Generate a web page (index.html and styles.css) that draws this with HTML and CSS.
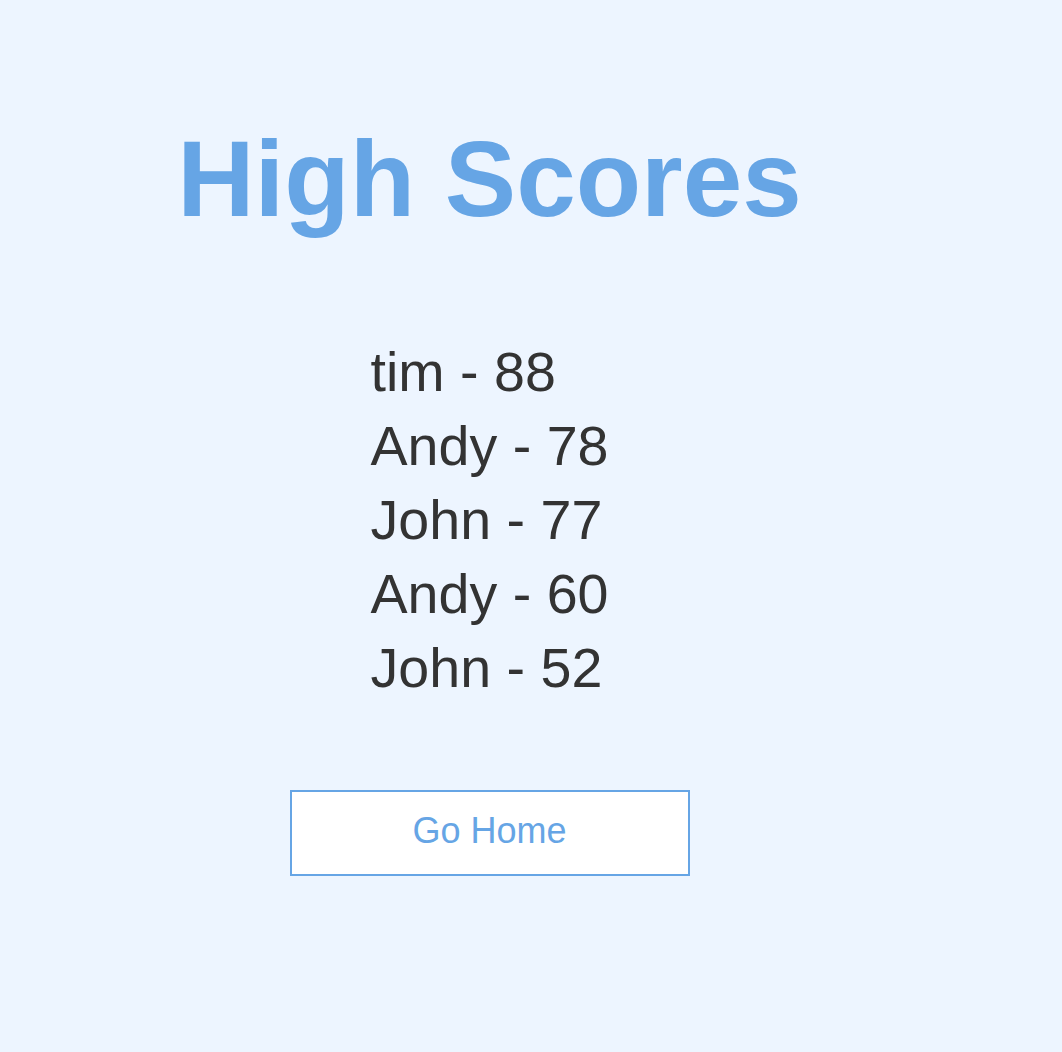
FILE: index.html
```html
<!DOCTYPE html>
<html lang="en">
<head>
<meta charset="utf-8">
<title>High Scores</title>
<link rel="stylesheet" href="styles.css">
</head>
<body>
<main class="page">
  <h1 class="title">High Scores</h1>
  <ul class="scores">
    <li>tim - 88</li>
    <li>Andy - 78</li>
    <li>John - 77</li>
    <li>Andy - 60</li>
    <li>John - 52</li>
  </ul>
  <a class="home-btn" href="#">Go Home</a>
</main>
</body>
</html>
```

FILE: styles.css
```css
html, body {
  margin: 0;
  padding: 0;
}

body {
  background: #edf5ff;
  font-family: "Liberation Sans", Arial, sans-serif;
  min-height: 1052px;
}

.page {
  width: 979px;
  display: flex;
  flex-direction: column;
  align-items: center;
  padding-top: 119px;
}

.title {
  margin: 0;
  font-size: 107px;
  line-height: 120px;
  font-weight: 700;
  color: #66a5e5;
}

.scores {
  list-style: none;
  margin: 96px 0 0;
  padding: 0;
}

.scores li {
  font-size: 55.6px;
  line-height: 74px;
  color: #333333;
}

.home-btn {
  display: block;
  box-sizing: border-box;
  margin-top: 85px;
  width: 400px;
  height: 86px;
  padding: 19px 0 23px;
  border: 2px solid #66a5e5;
  background: #ffffff;
  color: #66a5e5;
  font-size: 36px;
  line-height: 40px;
  text-align: center;
  text-decoration: none;
}
```
